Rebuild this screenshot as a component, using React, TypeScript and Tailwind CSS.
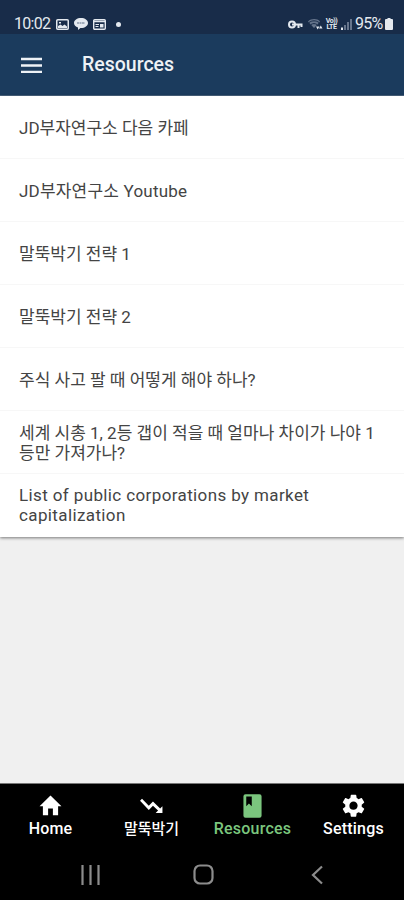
import React from 'react';

interface Resource {
  title: string;
  className: string;
}

interface TabItem {
  label: string;
  icon: React.ReactNode;
  className?: string;
}

const resources: Resource[] = [
  { title: 'JD부자연구소 다음 카페', className: '' },
  { title: 'JD부자연구소 Youtube', className: 'tracking-[0.2px]' },
  { title: '말뚝박기 전략 1', className: '' },
  { title: '말뚝박기 전략 2', className: '' },
  { title: '주식 사고 팔 때 어떻게 해야 하나?', className: '' },
  { title: '세계 시총 1, 2등 갭이 적을 때 얼마나 차이가 나야 1등만 가져가나?', className: 'break-all' },
  { title: 'List of public corporations by market capitalization', className: 'tracking-[0.38px]' },
];

const tabs: TabItem[] = [
  { label: 'Home', icon: <path d="M9.7 21.3v-6.5h4.6v6.5h5v-8.7h3.2L12 2.5 1.5 12.6h3.2v8.7z" /> },
  {
    label: '말뚝박기',
    icon: <path d="M16 19.3l2.3-2.5-4.9-4.6-4 4L1 7.5l1.9-1.9 6.5 6.6 4-4 6.9 6.6 2.2-2.1v6.6z" />,
    className: 'text-[15px]',
  },
  {
    label: 'Resources',
    icon: <path d="M18.7 1.2H5.3a2 2 0 0 0-2 2v18.6a2 2 0 0 0 2 2h13.4a2 2 0 0 0 2-2V3.2a2 2 0 0 0-2-2zM6 3.3h5.3v9.3l-2.7-2.6L6 12.6z" />,
  },
  {
    label: 'Settings',
    icon: (
      <path
        transform="translate(-1.2 -1) scale(1.1)"
        d="M19.14 12.94c.04-.3.06-.61.06-.94 0-.32-.02-.64-.07-.94l2.03-1.58a.49.49 0 0 0 .12-.61l-1.92-3.32a.488.488 0 0 0-.59-.22l-2.39.96c-.5-.38-1.03-.7-1.62-.94l-.36-2.54a.484.484 0 0 0-.48-.41h-3.84c-.24 0-.43.17-.47.41l-.36 2.54c-.59.24-1.13.57-1.62.94l-2.39-.96c-.22-.08-.47 0-.59.22L2.74 8.87c-.12.21-.08.47.12.61l2.03 1.58c-.05.3-.09.63-.09.94s.02.64.07.94l-2.03 1.58a.49.49 0 0 0-.12.61l1.92 3.32c.12.22.37.29.59.22l2.39-.96c.5.38 1.03.7 1.62.94l.36 2.54c.05.24.24.41.48.41h3.84c.24 0 .44-.17.47-.41l.36-2.54c.59-.24 1.13-.56 1.62-.94l2.39.96c.22.08.47 0 .59-.22l1.92-3.32c.12-.22.07-.47-.12-.61l-2.01-1.58zM12 15.6A3.61 3.61 0 0 1 8.4 12c0-1.98 1.62-3.6 3.6-3.6s3.6 1.62 3.6 3.6-1.62 3.6-3.6 3.6z"
      />
    ),
  },
];

function StatusBar() {
  return (
    <div className="flex h-[34px] items-end justify-between bg-[#182c49] pr-[11px] pl-[14px] text-[#e4e9ef]">
      <div className="flex h-5 items-center">
        <span className="w-[42px] text-[16px] tracking-[-0.7px]">10:02</span>
        <svg className="h-[11px] w-[13px]" viewBox="0 0 13 11" fill="none" stroke="currentColor" strokeWidth="1.5">
          <rect x=".75" y=".75" width="11.5" height="9.5" rx="1" />
          <path d="M2 9V7l2.5-1.5L6.5 7l2-1.5L11 7.5V9z" fill="currentColor" stroke="none" />
          <path d="M3 3h2v1.5H3z" fill="currentColor" stroke="none" />
        </svg>
        <svg className="ml-[5px] h-[12px] w-[14px]" viewBox="0 0 14 12">
          <path d="M7 0c3.9 0 7 2.1 7 5s-3.1 5-7 5h-.6L4 12V9.5C1.6 8.7 0 7 0 5 0 2.1 3.1 0 7 0z" fill="currentColor" />
          <path d="M3 5h8" stroke="#8a98ab" strokeWidth="1.5" strokeDasharray="2 .5" />
        </svg>
        <svg className="ml-[5px] h-[11px] w-[13px]" viewBox="0 0 13 11" fill="none" stroke="currentColor">
          <rect x=".7" y=".7" width="11.6" height="9.6" rx="1" strokeWidth="1.4" />
          <path d="M1 2.5h11" strokeWidth="1.5" />
          <path d="M2.5 5.5H6M2.5 7.5h3" />
          <rect x="7.5" y="5.5" width="2.5" height="2.5" fill="currentColor" />
        </svg>
        <span className="ml-[10px] size-[5px] rounded-full bg-current" />
      </div>
      <div className="flex h-5 items-center">
        <svg className="h-[9px] w-[15px]" viewBox="0 0 15 9" fill="none" stroke="currentColor" strokeWidth="2">
          <circle cx="4" cy="4.5" r="3" />
          <path d="M4 4.5h10.5M10.5 4v4M13.5 4v3" />
        </svg>
        <svg className="ml-[5px] h-[12px] w-[15px]" viewBox="0 0 15 12">
          <path d="M0 3.5C3.5.3 9 .3 12 3.5l-4.5 5L6 10z" fill="#66758c" />
          <path d="M1 4.5c3-2.2 7-2.2 10 0M3 6.5c2-1.2 4-1.2 6 0" fill="none" stroke="#182c49" />
          <path d="M8 8.5h3.5l-1.8 3zM11 10.5h3.5l-1.7-3z" fill="currentColor" />
        </svg>
        <span className="ml-[2px] w-[13px] text-center text-[7px] leading-[6px] font-bold tracking-[-0.4px]">
          Vo)) LTE
        </span>
        <svg className="ml-[3px] h-[11px] w-[11px]" viewBox="0 0 11 11">
          <path d="M0 11V8.5h2V11z" fill="#e4e9ef" />
          <path d="M3 11V6h2v5zM6 11V3h2v8zM9 11V0h2v11z" fill="#66758c" />
        </svg>
        <span className="ml-[3px] w-[29px] text-[16px] tracking-[-0.7px]">95%</span>
        <svg className="ml-px h-[12px] w-[8px]" viewBox="0 0 8 12" fill="currentColor">
          <path d="M2.5 0h3v1H7a1 1 0 0 1 1 1v9a1 1 0 0 1-1 1H1a1 1 0 0 1-1-1V2a1 1 0 0 1 1-1h1.5z" />
        </svg>
      </div>
    </div>
  );
}

function Header() {
  return (
    <header className="flex h-[62px] items-center border-b border-[#49637e] bg-[#1b3b5d] pl-[21px] text-[#eef2f6]">
      <button type="button" aria-label="Open menu">
        <svg className="h-[16px] w-[21px]" viewBox="0 0 21 16" stroke="currentColor" strokeWidth="2.6">
          <path d="M0 2h21M0 8.5h21M0 15h21" />
        </svg>
      </button>
      <h1 className="ml-10 pt-px text-[19.5px] leading-6 font-medium">Resources</h1>
    </header>
  );
}

function SystemNav() {
  return (
    <div className="flex h-[52px] items-center justify-between px-[81px] pt-px text-[#8c8c8c]">
      <svg className="h-5 w-[19px]" viewBox="0 0 19 20" fill="none" stroke="currentColor" strokeWidth="2.2">
        <path d="M1.5 0v20M9.5 0v20M17.5 0v20" />
      </svg>
      <svg className="mr-[5px] size-[21px]" viewBox="0 0 21 21" fill="none" stroke="currentColor" strokeWidth="2.2">
        <rect x="1.5" y="1.5" width="18" height="18" rx="5.5" />
      </svg>
      <svg className="h-5 w-[12px]" viewBox="0 0 12 20" fill="none" stroke="currentColor" strokeWidth="2.2">
        <path d="M11 1.5 2 10l9 8.5" />
      </svg>
    </div>
  );
}

export default function App() {
  return (
    <div className="flex h-[900px] w-[404px] flex-col overflow-hidden bg-[#f0f0f0] font-[Roboto,'Noto_Sans_CJK_KR',sans-serif]">
      <StatusBar />
      <Header />

      <ul className="bg-white shadow-[0_1px_3px_rgba(0,0,0,0.5)]">
        {resources.map(({ title, className }) => (
          <li
            key={title}
            className={`flex h-[63px] items-center border-b border-[#f7f7f7] pt-px pr-5 pl-[19px] text-[17px] leading-5 text-[#444] last:border-b-0 last:pt-0 last:pb-px ${className}`}
          >
            {title}
          </li>
        ))}
      </ul>

      <footer className="mt-auto bg-black">
        <nav className="flex h-[65px] border-t border-[#777]">
          {tabs.map(tab => (
            <button
              key={tab.label}
              type="button"
              className={`flex flex-1 flex-col items-center pt-[9px] ${
                tab.label === 'Resources' ? 'text-[#7bc67e]' : 'text-white'
              }`}
            >
              <svg className="size-[25px]" viewBox="0 0 24 24" fill="currentColor">
                {tab.icon}
              </svg>
              <span className={`pt-px leading-5 font-medium ${tab.className || 'text-[16px] tracking-[0.2px]'}`}>
                {tab.label}
              </span>
            </button>
          ))}
        </nav>
        <SystemNav />
      </footer>
    </div>
  );
}
